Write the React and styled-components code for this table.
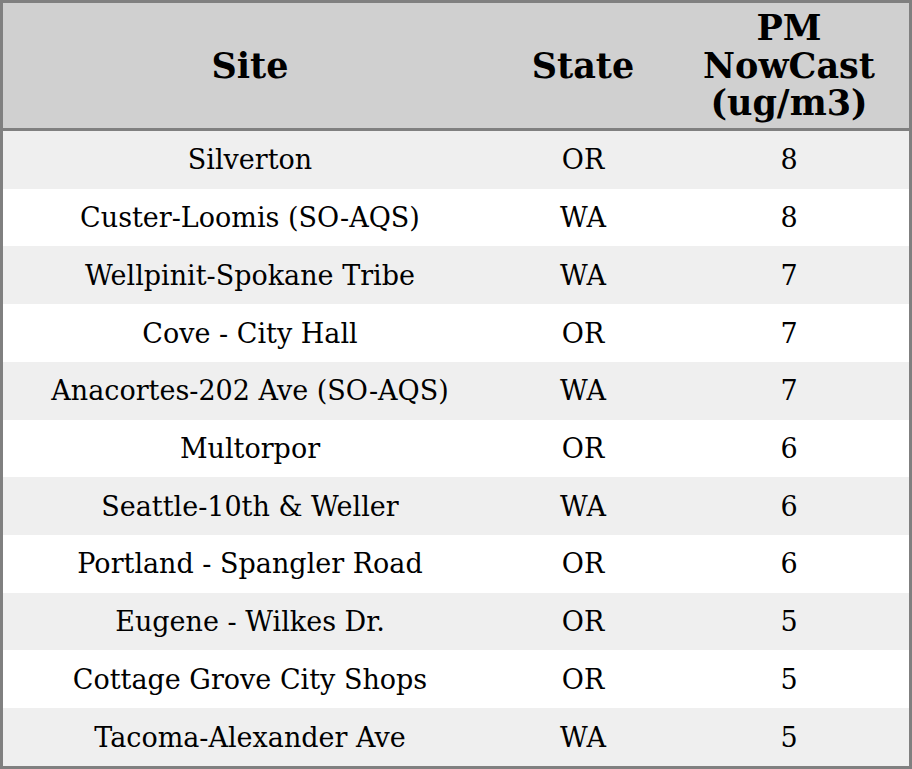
import React from 'react';
import styled, { createGlobalStyle } from 'styled-components';

const GlobalStyle = createGlobalStyle`
  html, body {
    margin: 0;
    padding: 0;
    background: #ffffff;
  }
  body {
    font-family: "DejaVu Serif", serif;
    color: #000;
  }
`;

const Table = styled.table`
  width: 912px;
  border-collapse: separate;
  border-spacing: 0;
  border: 3px solid #808080;
  table-layout: fixed;
  font-family: "DejaVu Serif", serif;
`;

const HeadCell = styled.th`
  width: ${(p) => p.$width}px;
  height: 125px;
  padding: 0;
  box-sizing: content-box;
  background: #d0d0d0;
  border-bottom: 3px solid #808080;
  font-size: 35px;
  font-weight: 700;
  line-height: 37.5px;
  text-align: center;
  vertical-align: middle;
`;

const Row = styled.tr`
  background: ${(p) => (p.$odd ? '#efefef' : '#ffffff')};
`;

const Cell = styled.td`
  height: 57.73px;
  padding: 0;
  box-sizing: border-box;
  font-size: 27px;
  text-align: center;
  vertical-align: middle;
`;

const sites = [
  ['Silverton', 'OR', 8],
  ['Custer-Loomis (SO-AQS)', 'WA', 8],
  ['Wellpinit-Spokane Tribe', 'WA', 7],
  ['Cove - City Hall', 'OR', 7],
  ['Anacortes-202 Ave (SO-AQS)', 'WA', 7],
  ['Multorpor', 'OR', 6],
  ['Seattle-10th & Weller', 'WA', 6],
  ['Portland - Spangler Road', 'OR', 6],
  ['Eugene - Wilkes Dr.', 'OR', 5],
  ['Cottage Grove City Shops', 'OR', 5],
  ['Tacoma-Alexander Ave', 'WA', 5],
];

export default function App() {
  return (
    <>
      <GlobalStyle />
      <Table>
        <thead>
          <tr>
            <HeadCell $width={494}>Site</HeadCell>
            <HeadCell $width={172}>State</HeadCell>
            <HeadCell $width={240}>
              PM
              <br />
              NowCast
              <br />
              (ug/m3)
            </HeadCell>
          </tr>
        </thead>
        <tbody>
          {sites.map(([site, state, pm], i) => (
            <Row key={site} $odd={i % 2 === 0}>
              <Cell>{site}</Cell>
              <Cell>{state}</Cell>
              <Cell>{pm}</Cell>
            </Row>
          ))}
        </tbody>
      </Table>
    </>
  );
}
